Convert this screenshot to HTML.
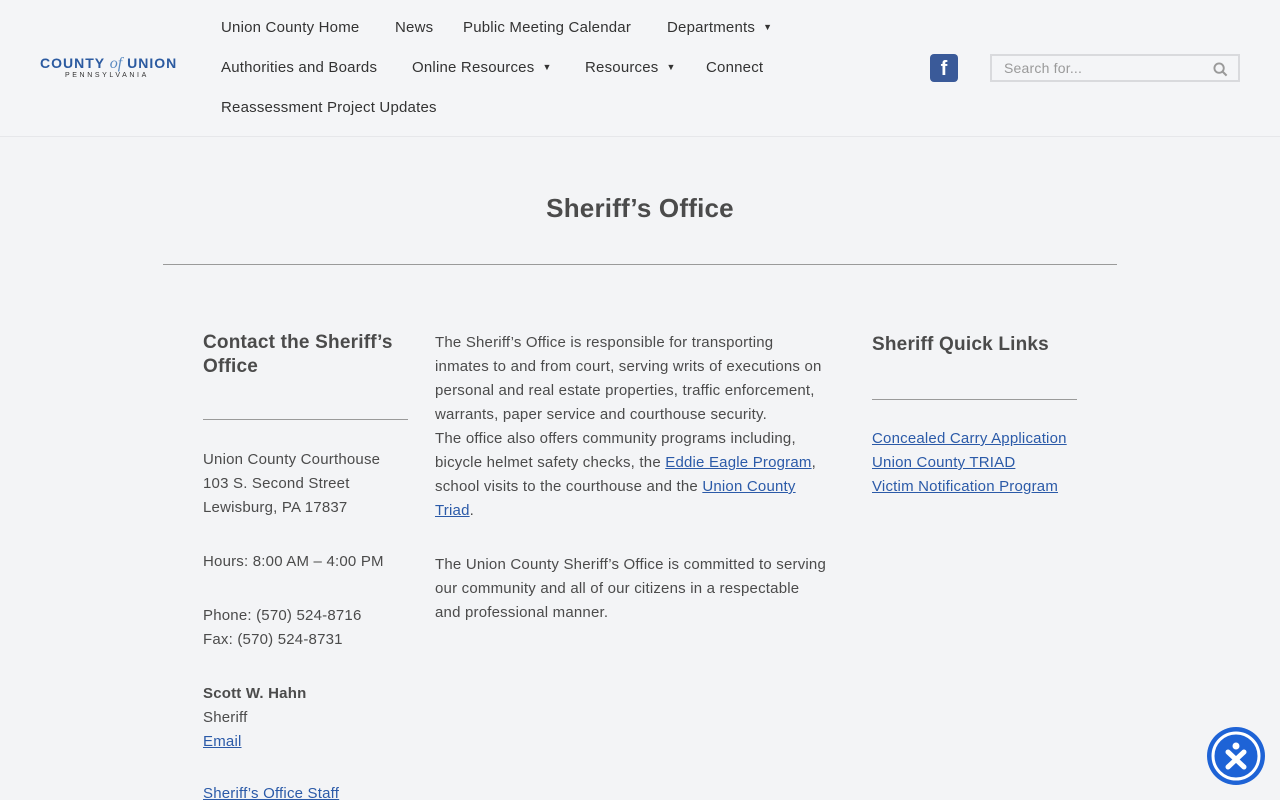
<!DOCTYPE html>
<html style="overflow:hidden;height:800px"><head><meta charset="utf-8"><style>
*{margin:0;padding:0;box-sizing:border-box}
body{width:1280px;height:800px;overflow:hidden;background:#f3f4f6;font-family:"Liberation Sans",sans-serif;color:#4b4b4b;font-size:15px;letter-spacing:.2px;position:relative}
.hdr{position:absolute;left:0;top:0;width:1280px;height:137px;border-bottom:1px solid #e6e7ea;background:#f4f5f7}
.logo{position:absolute;left:40px;top:55px;color:#2b5aa0;font-weight:bold;font-size:14px;letter-spacing:1px}
.logo i{font-family:"Liberation Serif",serif;font-weight:normal;font-size:16px;color:#5a8ac0;letter-spacing:0}
.logo small{position:absolute;left:25px;top:17px;font-size:7px;color:#333;letter-spacing:2.6px;font-weight:normal}
.nav a{position:absolute;color:#333;font-size:15px;text-decoration:none;white-space:nowrap}
.car{font-size:9px;margin-left:8px;position:relative;top:-2px}
.fb{position:absolute;left:930px;top:54px;width:28px;height:28px;background:#3a5a99;border-radius:4px;color:#fff;font-weight:bold;font-size:20px;text-align:center;line-height:30px}
.search{position:absolute;left:990px;top:54px;width:250px;height:28px;border:2px solid #d9dadd;background:#f4f5f7;color:#9a9a9a;font-size:14px;padding:4px 12px}
h1{position:absolute;top:193px;left:0;width:1280px;text-align:center;font-size:26px;color:#4b4b4b}
.hr{position:absolute;height:1px;background:#9a9a9a}
.col{position:absolute;line-height:24px;white-space:nowrap}
.col p{margin-top:30px}
h3{font-size:19px;line-height:24px;color:#4b4b4b}
a.l{color:#2b5aa8;text-decoration:underline}
.acc{position:absolute;left:1207px;top:727px;width:58px;height:58px;border-radius:50%;background:#1e63d6}
</style></head><body>
<div class="hdr">
<div class="logo">COUNTY <i>of</i> UNION<small>PENNSYLVANIA</small></div>
<div class="nav">
<a style="left:221px;top:19px">Union County Home</a>
<a style="left:395px;top:19px">News</a>
<a style="left:463px;top:19px">Public Meeting Calendar</a>
<a style="left:667px;top:19px">Departments<span class="car">▼</span></a>
<a style="left:221px;top:59px">Authorities and Boards</a>
<a style="left:412px;top:59px">Online Resources<span class="car">▼</span></a>
<a style="left:585px;top:59px">Resources<span class="car">▼</span></a>
<a style="left:706px;top:59px">Connect</a>
<a style="left:221px;top:99px">Reassessment Project Updates</a>
</div>
<div class="fb">f</div>
<div class="search">Search for...
<svg style="position:absolute;right:10px;top:6px" width="15" height="15" viewBox="0 0 16 16"><circle cx="6.5" cy="6.5" r="5" stroke="#9a9a9a" stroke-width="2" fill="none"/><path d="M10 10l4.5 4.5" stroke="#9a9a9a" stroke-width="2.2"/></svg></div>
</div>
<h1>Sheriff’s Office</h1>
<div class="hr" style="left:163px;top:264px;width:954px"></div>
<div class="col" style="left:203px;top:331px;width:210px">
<h3>Contact the Sheriff’s<br>Office</h3>
<div class="hr" style="left:0;top:88px;width:205px"></div>
<div style="position:absolute;top:117px;width:220px">Union County Courthouse<br>103 S. Second Street<br>Lewisburg, PA 17837
<p>Hours: 8:00 AM – 4:00 PM</p>
<p>Phone: (570) 524-8716<br>Fax: (570) 524-8731</p>
<p><b>Scott W. Hahn</b><br>Sheriff<br><a class="l">Email</a></p>
<p style="margin-top:28px"><a class="l">Sheriff’s Office Staff</a></p></div>
</div>
<div class="col" style="left:435px;top:331px;width:415px">The Sheriff’s Office is responsible for transporting<br>inmates to and from court, serving writs of executions on<br>personal and real estate properties, traffic enforcement,<br>warrants, paper service and courthouse security.<br>The office also offers community programs including,<br>bicycle helmet safety checks, the <a class="l">Eddie Eagle Program</a>,<br>school visits to the courthouse and the <a class="l">Union County</a><br><a class="l">Triad</a>.
<p>The Union County Sheriff’s Office is committed to serving<br>our community and all of our citizens in a respectable<br>and professional manner.</p></div>
<div class="col" style="left:872px;top:333px;width:220px">
<h3>Sheriff Quick Links</h3>
<div class="hr" style="left:0;top:66px;width:205px"></div>
<div style="position:absolute;top:94px;white-space:nowrap"><a class="l">Concealed Carry Application</a><br><a class="l">Union County TRIAD</a><br><a class="l">Victim Notification Program</a></div>
</div>
<div class="acc"><svg width="58" height="58" viewBox="0 0 58 58"><circle cx="29" cy="29" r="23" stroke="#fff" stroke-width="3" fill="none"/><circle cx="29" cy="19" r="3.5" fill="#fff"/><path d="M21 25l16 15M37 25L21 40" stroke="#fff" stroke-width="5" stroke-linecap="round"/></svg></div>
</body></html>
